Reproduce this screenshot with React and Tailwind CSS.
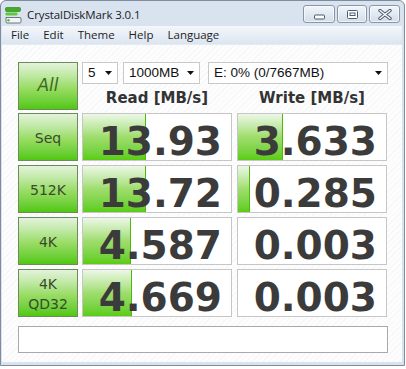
import React from "react";

const rows = [
  { label: ["Seq"], read: "13.93", rw: 64, write: "3.633", ww: 46 },
  { label: ["512K"], read: "13.72", rw: 64, write: "0.285", ww: 13 },
  { label: ["4K"], read: "4.587", rw: 49, write: "0.003", ww: 0 },
  { label: ["4K", "QD32"], read: "4.669", rw: 50, write: "0.003", ww: 0 },
];

function Arrow() {
  return (
    <svg width="7" height="4" viewBox="0 0 7 4" className="shrink-0">
      <path d="M0 0 H7 L3.5 4 Z" fill="#111" />
    </svg>
  );
}

function Select({ w, text }) {
  return (
    <div
      className={`${w} h-[22px] flex items-center justify-between border border-[#c9c9c9] bg-white pl-[5px] pr-[5px] text-[13.5px] text-[#111] font-['Liberation_Sans',Arial,sans-serif]`}
    >
      <span>{text}</span>
      <Arrow />
    </div>
  );
}

function GreenButton({ children, className = "" }) {
  return (
    <div
      className={`w-[60px] h-[48px] shrink-0 border border-[#6d8b5b] bg-gradient-to-b from-[#e4f3dc] via-[#98dc62] via-55% to-[#4fc805] flex flex-col items-center justify-center ${className}`}
    >
      {children}
    </div>
  );
}

function Cell({ value, width }) {
  return (
    <div className="relative w-[150px] h-[48px] shrink-0 border border-[#c6c6c6] bg-white">
      {width > 0 && (
        <div
          className="absolute left-0 top-0 bottom-0 bg-gradient-to-b from-[#edf7e7] via-[#9fdd6c] via-50% to-[#5acd0b] border-r border-[#4fb80a]"
          style={{ width: width - 1 }}
        />
      )}
      <div className="relative text-right pr-[9px] pt-[10px] leading-[36px] text-[39px] font-bold text-[#3b3b3b] font-['DejaVu_Sans',Verdana,sans-serif]">
        {value}
      </div>
    </div>
  );
}

function WinButton({ w, children }) {
  return (
    <div
      className={`${w} h-[18px] rounded-[3px] border border-[#8797ab] bg-gradient-to-b from-[#f3f6fa] via-[#e2e9f2] to-[#d3dde9] flex items-center justify-center shadow-[inset_0_0_0_1px_rgba(255,255,255,0.6)]`}
    >
      {children}
    </div>
  );
}

export default function App() {
  return (
    <div className="w-[406px] h-[369px] bg-white overflow-hidden">
      <div className="w-[405px] h-[366px] rounded-t-[6px] border border-[#7f8c9c] bg-[#d9e3ef] flex flex-col pl-[1px] pr-[2px] pb-[3px]">
        {/* Title bar */}
        <div className="h-[25px] flex items-center shrink-0">
          <svg width="17" height="17" viewBox="0 0 17 17" className="ml-[3px] mt-[3px]">
            <rect x="0.5" y="0.5" width="15" height="4" rx="1" fill="#3fae25" stroke="#2b7a18" strokeWidth="0.6" />
            <rect x="0.5" y="5.5" width="12" height="3" rx="1" fill="#63c640" />
            <path d="M1 10.5 H15 Q16 10.5 16 12 V14.5 Q16 16 15 16 H2 Q1 16 1 14.5 Z" fill="#f4f4f4" stroke="#5e6670" strokeWidth="0.9" />
            <circle cx="3.5" cy="13.3" r="1.2" fill="#4cbf2a" />
          </svg>
          <span className="ml-[5px] mt-[3px] text-[11.5px] text-[#1b1b1b] font-['Open_Sans','Noto_Sans',sans-serif] tracking-[-0.1px]">
            CrystalDiskMark 3.0.1
          </span>
          <div className="ml-auto mr-[2px] mt-[1px] flex gap-[2px]">
            <WinButton w="w-[32px]">
              <svg width="11" height="6" viewBox="0 0 11 6" className="mt-[5px]">
                <rect x="0.5" y="1" width="10" height="4" rx="1" fill="#fff" stroke="#4b5a6c" />
              </svg>
            </WinButton>
            <WinButton w="w-[30px]">
              <svg width="11" height="9" viewBox="0 0 11 9">
                <rect x="0.5" y="0.5" width="10" height="8" rx="1" fill="#fff" stroke="#4b5a6c" />
                <rect x="3" y="3" width="5" height="2.5" fill="none" stroke="#4b5a6c" />
              </svg>
            </WinButton>
            <WinButton w="w-[31px]">
              <svg width="14" height="11" viewBox="0 0 14 11">
                <path d="M2 1.5 L12 9.5 M12 1.5 L2 9.5" stroke="#4b5a6c" strokeWidth="3.4" strokeLinecap="round" />
                <path d="M2 1.5 L12 9.5 M12 1.5 L2 9.5" stroke="#fff" strokeWidth="1.4" strokeLinecap="round" />
              </svg>
            </WinButton>
          </div>
        </div>
        {/* Menu bar */}
        <div className="h-[18px] shrink-0 bg-gradient-to-b from-[#f4f7fb] to-[#dbe5f1] flex items-center gap-[14px] pl-[9px] text-[11.5px] text-[#1e1e1e] font-['Open_Sans','Noto_Sans',sans-serif]">
          <span>File</span>
          <span>Edit</span>
          <span>Theme</span>
          <span>Help</span>
          <span>Language</span>
        </div>
        {/* Client */}
        <div className="flex-1 bg-[repeating-linear-gradient(135deg,#f6f7f9_0px,#f6f7f9_1px,#fdfdfe_1px,#fdfdfe_4px)] border-t border-[#e6ebf2] pl-[16px] pt-[17px]">
          <div className="flex">
            <GreenButton>
              <span className="text-[17px] text-[#3e6a22] font-['DejaVu_Sans',sans-serif] italic">All</span>
            </GreenButton>
            <div className="ml-[4px] flex flex-col">
              <div className="flex">
                <Select w="w-[36px]" text="5" />
                <Select w="w-[77px] ml-[5px]" text="1000MB" />
                <Select w="w-[180px] ml-[8px]" text="E: 0% (0/7667MB)" />
              </div>
              <div className="flex mt-[3px] leading-[22px] text-[15px] font-bold text-[#333] font-['DejaVu_Sans',Verdana,sans-serif]">
                <div className="w-[150px] text-center">Read [MB/s]</div>
                <div className="w-[150px] ml-[5px] text-center">Write [MB/s]</div>
              </div>
            </div>
          </div>
          <div className="mt-[3px] flex flex-col gap-[4px]">
            {rows.map((r) => (
              <div key={r.label.join("")} className="flex">
                <GreenButton>
                  {r.label.map((l) => (
                    <span
                      key={l}
                      className="text-[14px] leading-[18px] text-[#3a4a2e] font-['DejaVu_Sans',sans-serif] mt-[2px]"
                    >
                      {l}
                    </span>
                  ))}
                </GreenButton>
                <div className="ml-[4px]">
                  <Cell value={r.read} width={r.rw} />
                </div>
                <div className="ml-[5px]">
                  <Cell value={r.write} width={r.ww} />
                </div>
              </div>
            ))}
          </div>
          <div className="mt-[9px] w-[370px] h-[27px] border border-[#a9a9a9] bg-white" />
        </div>
      </div>
    </div>
  );
}
